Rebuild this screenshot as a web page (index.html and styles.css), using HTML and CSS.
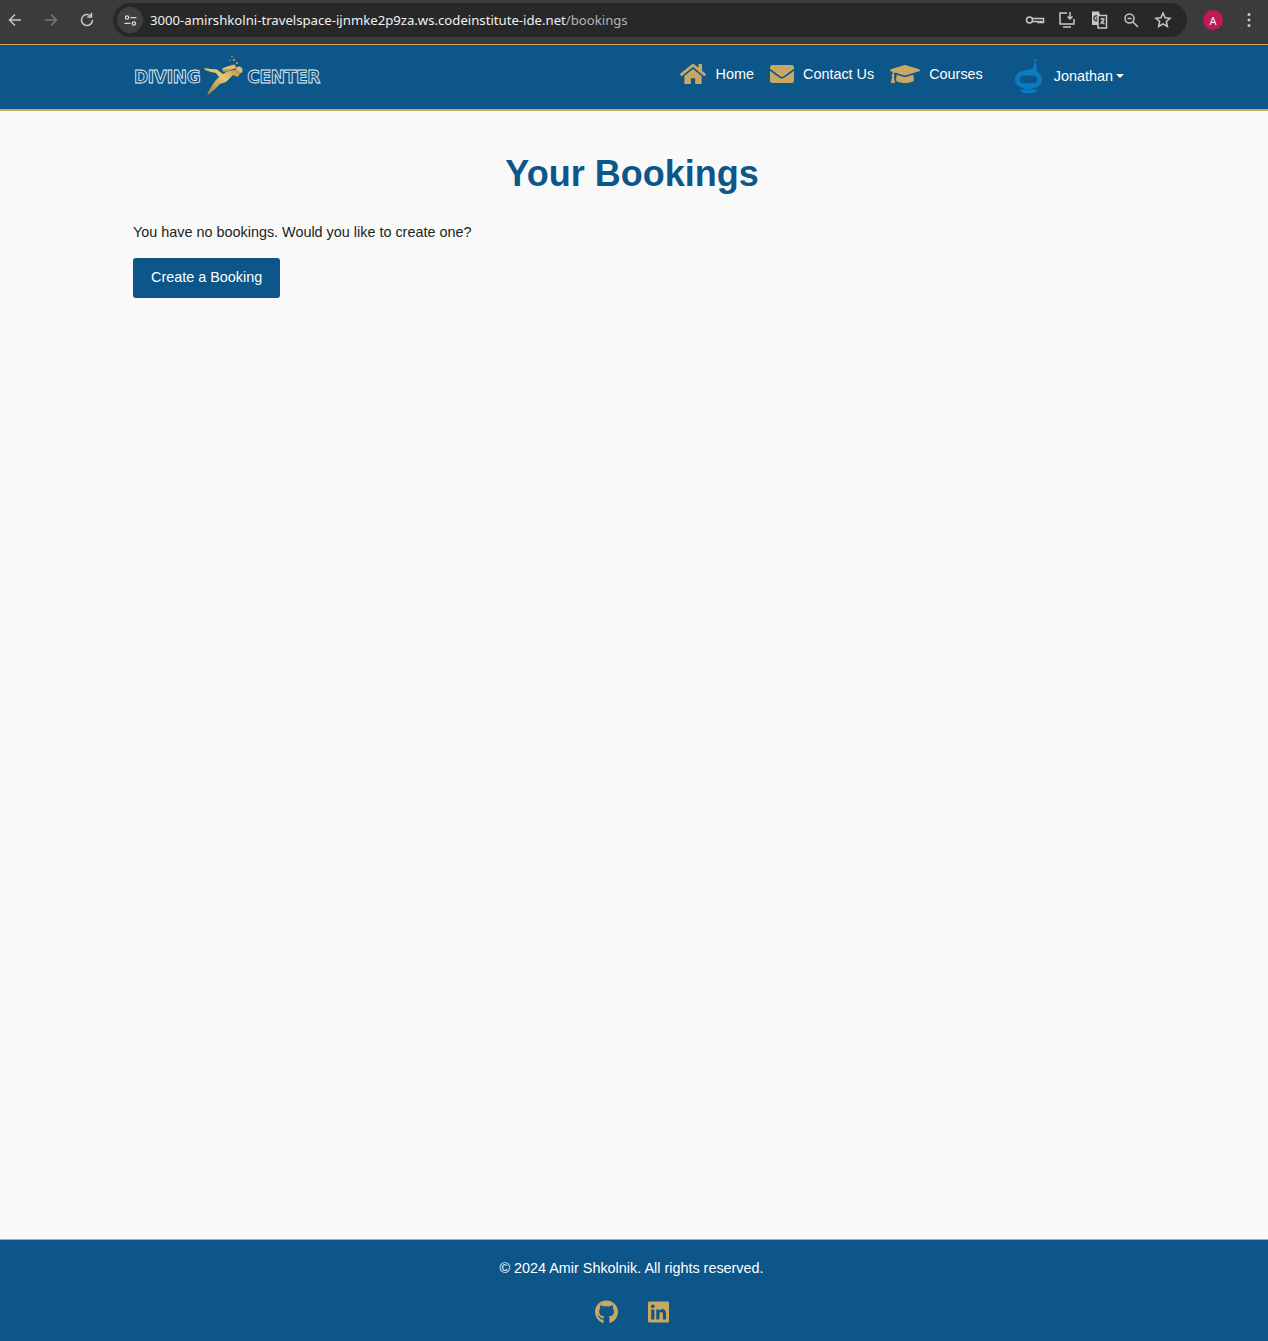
FILE: index.html
```html
<!DOCTYPE html>
<html lang="en">
<head>
    <meta charset="UTF-8">
    <meta name="viewport" content="width=device-width, initial-scale=1.0">
    <title>Your Bookings</title>
    <link rel="stylesheet" href="styles.css">
</head>
<body>
    <div class="browser-bar">
        <div class="browser-nav">
            <svg class="tool" viewBox="0 0 20 20"><path d="M16 10H5M10 4.500 4.500 10l5.500 5.500"/></svg>
            <svg class="tool tool-off" viewBox="0 0 20 20"><path d="M4 10h11M10 4.500l5.500 5.500-5.500 5.500"/></svg>
            <svg class="tool" viewBox="0 0 20 20"><path d="M15.500 10a5.500 5.500 0 1 1-1.700-4M14.500 2.800V7h-4.200"/></svg>
        </div>
        <div class="address">
            <span class="site-btn">
                <svg viewBox="0 0 20 20"><circle cx="6" cy="6.500" r="2"/><path d="M10 6.500h7M3 13.500h7"/><circle cx="14" cy="13.500" r="2"/></svg>
            </span>
            <span class="url">3000-amirshkolni-travelspace-ijnmke2p9za.ws.codeinstitute-ide.net<span class="url-path">/bookings</span></span>
            <div class="address-tools">
                <svg class="tool" viewBox="0 0 20 20"><circle cx="4.500" cy="10" r="3"/><path d="M7.500 8.500H18.500v4h-2v-1h-1.500v1h-2v-1H7.500"/></svg>
                <svg class="tool" viewBox="0 0 20 20"><path d="M10 3H3v11h14V9M6 17h8M13 2v7M10.500 6.500 13 9l2.500-2.500"/></svg>
                <svg class="tool" viewBox="0 0 20 20"><path class="solid" d="M3 1.500h7l1 3.500h-2v10H3z"/><path class="cut" d="M8.500 6a2.500 2.500 0 1 0 0 4.500V8.500H7"/><path d="M9 5.500h8.500V18H9zM11.500 9h4M13.500 8v1M15 9c-.5 3-2 4-3.500 5M12.500 11c.5 1.500 1.500 2.500 3 3"/></svg>
                <svg class="tool" viewBox="0 0 20 20"><circle cx="8.500" cy="8.500" r="4.500"/><path d="M12 12l5 5M6.500 8.500h4"/></svg>
                <svg class="tool" viewBox="0 0 20 20"><path d="M10 3l2.100 4.700 5 .5-3.800 3.300 1.100 5L10 13.900l-4.400 2.600 1.100-5L2.900 8.200l5-.5z"/></svg>
            </div>
        </div>
        <span class="avatar">A</span>
        <svg class="menu-dots" viewBox="0 0 4 16"><circle cx="2" cy="2.500" r="1.500"/><circle cx="2" cy="8" r="1.500"/><circle cx="2" cy="13.500" r="1.500"/></svg>
    </div>

    <header class="site-header">
        <a class="logo" href="#">
            <span class="logo-word">DIVING</span>
            <svg class="diver" viewBox="0 0 42 42">
                <defs>
                    <linearGradient id="gold" x1="0" y1="1" x2="1" y2="0">
                        <stop offset="0" stop-color="#9a7a3a"/>
                        <stop offset="0.6" stop-color="#e6c878"/>
                        <stop offset="1" stop-color="#b8933f"/>
                    </linearGradient>
                </defs>
                <path fill="url(#gold)" d="M0 12l7 1 6 .5 6 4.500 5-3 9-1.500 3 3.500-2 4-5-2-3 3-4 4-6 2-5 5-6 5-2 .5 4-7.500 4-6 4-4-3-4-5-1-6-2z"/>
                <rect fill="url(#gold)" x="18" y="10" width="14" height="4.500" rx="2" transform="rotate(-18 25 12)"/>
                <circle fill="url(#gold)" cx="35" cy="14" r="3.500"/>
                <g fill="#c9a65f">
                    <circle cx="28" cy="0.800" r="0.800"/>
                    <circle cx="30" cy="4" r="1.100"/>
                    <circle cx="33" cy="7" r="1"/>
                    <circle cx="26" cy="4.500" r="0.700"/>
                </g>
            </svg>
            <span class="logo-word">CENTER</span>
        </a>
        <nav class="main-nav">
            <a class="nav-link" href="#">
                <svg class="nav-icon icon-home" viewBox="0 0 576 512"><path d="M280.37 148.26L96 300.11V464a16 16 0 0 0 16 16l112.06-.29a16 16 0 0 0 15.92-16V368a16 16 0 0 1 16-16h64a16 16 0 0 1 16 16v95.64a16 16 0 0 0 16 16.05L464 480a16 16 0 0 0 16-16V300L295.67 148.26a12.19 12.19 0 0 0-15.3 0zM571.6 251.47L488 182.56V44.05a12 12 0 0 0-12-12h-56a12 12 0 0 0-12 12v72.61L318.47 43a48 48 0 0 0-61 0L4.34 251.47a12 12 0 0 0-1.6 16.9l25.5 31A12 12 0 0 0 45.15 301l235.22-193.74a12.19 12.19 0 0 1 15.3 0L530.9 301a12 12 0 0 0 16.9-1.6l25.5-31a12 12 0 0 0-1.7-16.93z"/></svg>
                Home
            </a>
            <a class="nav-link" href="#">
                <svg class="nav-icon icon-mail" viewBox="0 0 512 512"><path d="M502.3 190.8c3.900-3.100 9.700-.2 9.700 4.700V400c0 26.500-21.500 48-48 48H48c-26.500 0-48-21.500-48-48V195.600c0-5 5.700-7.800 9.700-4.700 22.400 17.400 52.100 39.500 154.100 113.600 21.100 15.400 56.700 47.800 92.200 47.600 35.700.3 72-32.800 92.300-47.600 102-74.100 131.600-96.300 154-113.700zM256 320c23.200.4 56.600-29.200 73.400-41.400 132.700-96.300 142.800-104.700 173.400-128.700 5.800-4.500 9.200-11.500 9.200-18.900v-19c0-26.500-21.500-48-48-48H48C21.500 64 0 85.500 0 112v19c0 7.400 3.400 14.300 9.200 18.900 30.600 23.900 40.700 32.400 173.400 128.700 16.800 12.200 50.200 41.800 73.400 41.400z"/></svg>
                Contact Us
            </a>
            <a class="nav-link" href="#">
                <svg class="nav-icon icon-cap" viewBox="0 0 640 512"><path d="M622.34 153.2L343.4 67.5c-15.2-4.670-31.600-4.670-46.790 0L17.660 153.200c-23.540 7.230-23.540 38.360 0 45.590l48.630 14.940c-10.670 13.190-17.230 29.280-17.880 46.900C38.780 266.150 32 276.110 32 288c0 10.780 5.680 19.850 13.860 25.650L20.330 428.530C18.110 438.520 25.710 448 35.940 448h56.110c10.240 0 17.840-9.480 15.620-19.470L82.140 313.650C90.320 307.850 96 298.780 96 288c0-11.570-6.470-21.250-15.660-26.870.76-15.020 8.440-28.300 20.690-36.720L296.600 284.500c9.060 2.780 26.440 6.250 46.790 0l278.950-85.700c23.550-7.240 23.550-38.360 0-45.600zM352.790 315.090c-28.530 8.760-52.840 3.920-65.590 0l-145.020-44.550L128 384c0 35.350 85.960 64 192 64s192-28.650 192-64l-14.180-113.470-145.030 44.560z"/></svg>
                Courses
            </a>
            <a class="user-link" href="#">
                <svg class="mask-icon" viewBox="0 0 28 36">
                    <circle cx="21" cy="1.500" r="1.500"/>
                    <rect x="19.800" y="4" width="2.400" height="8"/>
                    <path d="M5 14C9 10 18 12 19.800 8h2.400v6z"/>
                    <rect class="mask-ring" x="2.500" y="14.500" width="23" height="13" rx="6.500"/>
                    <rect x="10" y="28" width="8" height="3"/>
                    <path d="M5 31.500h18c-1 3-5 4-9 4s-8-1-9-4z"/>
                </svg>
                Jonathan
                <span class="caret"></span>
            </a>
        </nav>
    </header>

    <main class="content">
        <h1 class="page-title">Your Bookings</h1>
        <p class="empty-text">You have no bookings. Would you like to create one?</p>
        <a class="btn" href="#">Create a Booking</a>
    </main>

    <footer class="site-footer">
        <p class="copyright">© 2024 Amir Shkolnik. All rights reserved.</p>
        <div class="social">
            <a href="#"><svg class="social-github" viewBox="0 0 496 512"><path d="M165.900 397.400c0 2-2.300 3.600-5.200 3.600-3.300 0-5.600-1.600-5.600-3.600 0-2 2.300-3.600 5.200-3.600 3-.3 5.600 1.300 5.600 3.600zm-31.100-4.500c-.7 2 1.300 4.300 4.300 4.900 2.600 1 5.600 0 6.200-2s-1.300-4.300-4.300-5.200c-2.600-.7-5.500.3-6.200 2.300zm44.200-1.700c-2.900.7-4.900 2.600-4.600 4.900.3 2 2.900 3.300 5.900 2.600 2.900-.7 4.900-2.600 4.600-4.600-.3-1.900-3-3.200-5.900-2.900zM244.800 8C106.100 8 0 113.300 0 252c0 110.900 69.800 205.800 169.500 239.200 12.800 2.300 17.300-5.600 17.300-12.100 0-6.200-.3-40.400-.3-61.400 0 0-70 15-84.700-29.800 0 0-11.400-29.100-27.800-36.600 0 0-22.900-15.700 1.600-15.400 0 0 24.900 2 38.600 25.800 21.900 38.600 58.600 27.500 72.900 20.900 2.300-16 8.800-27.100 16-33.700-55.900-6.200-112.300-14.300-112.300-110.500 0-27.500 7.600-41.300 23.600-58.900-2.600-6.500-11.100-33.300 2.600-67.900 20.900-6.500 69 27 69 27 20-5.600 41.500-8.500 62.800-8.500s42.800 2.900 62.800 8.500c0 0 48.100-33.600 69-27 13.700 34.700 5.200 61.400 2.600 67.900 16 17.700 25.800 31.500 25.800 58.900 0 96.500-58.900 104.200-114.800 110.500 9.200 7.900 17 22.900 17 46.400 0 33.700-.3 75.400-.3 83.600 0 6.500 4.600 14.400 17.300 12.100C428.200 457.800 496 362.900 496 252 496 113.300 383.500 8 244.800 8z"/></svg></a>
            <a href="#"><svg class="social-linkedin" viewBox="0 0 448 512"><path d="M416 32H31.900C14.300 32 0 46.500 0 64.300v383.400C0 465.500 14.300 480 31.900 480H416c17.600 0 32-14.500 32-32.300V64.300c0-17.800-14.400-32.300-32-32.300zM135.400 416H69V202.200h66.500V416zm-33.200-243c-21.300 0-38.500-17.300-38.500-38.500S80.900 96 102.200 96c21.200 0 38.500 17.300 38.500 38.500 0 21.300-17.200 38.500-38.500 38.500zm282.100 243h-66.400V312c0-24.800-.5-56.700-34.500-56.700-34.600 0-39.900 27-39.900 54.900V416h-66.400V202.200h63.700v29.200h.9c8.900-16.800 30.600-34.500 62.900-34.500 67.200 0 79.700 44.300 79.700 101.900V416z"/></svg></a>
        </div>
    </footer>
</body>
</html>
```

FILE: styles.css
```css
* {
    box-sizing: border-box;
}
html, body {
    height: 100%;
}
body {
    font-family: "Liberation Sans", Arial, sans-serif;
    margin: 0;
    padding: 0;
    min-height: 100vh;
    display: flex;
    flex-direction: column;
    background-color: #f9f9f9;
    color: #222;
}
a {
    color: inherit;
    text-decoration: none;
}

/* browser toolbar */
.browser-bar {
    height: 44px;
    flex: none;
    display: flex;
    align-items: center;
    background-color: #3b3b3b;
    padding-bottom: 4px;
}
.browser-nav {
    display: flex;
    gap: 16px;
    width: 113px;
    padding-left: 5px;
}
.tool {
    width: 20px;
    height: 20px;
    fill: none;
    stroke: #c7c7c7;
    stroke-width: 1.500;
}
.tool .solid {
    fill: #c7c7c7;
    stroke: none;
}
.tool .cut {
    stroke: #3b3b3b;
}
.tool-off {
    stroke: #7a7a7a;
}
.address {
    width: 1074px;
    height: 34px;
    display: flex;
    align-items: center;
    border-radius: 17px;
    background-color: #282828;
    padding: 0 14px 0 4px;
}
.site-btn {
    width: 26px;
    height: 26px;
    flex: none;
    display: flex;
    align-items: center;
    justify-content: center;
    border-radius: 50%;
    background-color: #3f3f3f;
}
.site-btn svg {
    width: 17px;
    height: 17px;
    fill: none;
    stroke: #d8d8d8;
    stroke-width: 1.500;
}
.url {
    margin-left: 7px;
    font-family: "Noto Sans", sans-serif;
    font-size: 13.170px;
    color: #f1f1f1;
    white-space: nowrap;
}
.url-path {
    color: #b5b5b5;
}
.address-tools {
    display: flex;
    gap: 12px;
    margin-left: auto;
}
.avatar {
    width: 20px;
    height: 20px;
    margin-left: 16px;
    display: flex;
    align-items: center;
    justify-content: center;
    border-radius: 50%;
    background-color: #c2185b;
    color: #f5f5f5;
    font-family: "Noto Sans", sans-serif;
    font-size: 11px;
}
.menu-dots {
    width: 4px;
    height: 16px;
    margin-left: 24px;
    fill: #c7c7c7;
}

/* site header */
.site-header {
    height: 67px;
    flex: none;
    display: flex;
    align-items: center;
    justify-content: space-between;
    padding: 0 144px 0 134px;
    background-color: #0d5689;
    border-top: 1px solid #c8a862;
    border-bottom: 2px solid #c8a862;
}
.logo {
    display: flex;
    align-items: center;
    gap: 4px;
}
.logo-word {
    font-family: "DejaVu Sans", sans-serif;
    font-weight: 700;
    font-size: 17px;
    letter-spacing: -0.300px;
    color: transparent;
    -webkit-text-stroke: 0.800px #e8f2f8;
}
.diver {
    width: 42px;
    height: 42px;
    margin-right: -3px;
}
.main-nav {
    display: flex;
    align-items: center;
    margin-top: -2px;
}
.nav-link {
    display: flex;
    align-items: center;
    margin-left: 16px;
    font-size: 14.400px;
    color: #fff;
    margin-top: -4px;
}
.nav-icon {
    fill: #c8a862;
}
.icon-home {
    width: 26px;
    height: 24px;
    margin-right: 10px;
}
.icon-mail {
    width: 24px;
    height: 24px;
    margin-right: 9px;
}
.icon-cap {
    width: 30px;
    height: 24px;
    margin-right: 9px;
}
.user-link {
    display: flex;
    align-items: center;
    margin-left: 32px;
    font-size: 14.400px;
    color: #fff;
}
.mask-icon {
    width: 27px;
    height: 35px;
    margin-right: 12px;
    fill: #0a7cc4;
}
.mask-ring {
    fill: none;
    stroke: #0a7cc4;
    stroke-width: 5;
}
.caret {
    width: 0;
    height: 0;
    margin-left: 3px;
    border-top: 4px solid #fff;
    border-left: 4px solid transparent;
    border-right: 4px solid transparent;
}

/* page content */
.content {
    flex: 1;
    padding: 43px 133px 0;
}
.page-title {
    margin: 0 4px 28px 0;
    text-align: center;
    font-size: 36px;
    line-height: 40px;
    color: #0d5689;
}
.empty-text {
    margin: 0 0 16px;
    font-size: 14.400px;
    line-height: 20px;
}
.btn {
    display: inline-block;
    height: 40px;
    padding: 0 18px;
    line-height: 39px;
    font-size: 14.400px;
    color: #fff;
    background-color: #0d5689;
    border-radius: 3px;
}

/* footer */
.site-footer {
    flex: none;
    height: 102px;
    padding: 19px 5px 0 0;
    text-align: center;
    background-color: #0d5689;
    border-top: 1px solid #c8a862;
    color: #fff;
}
.copyright {
    margin: 0 0 23px;
    font-size: 14.400px;
    line-height: 18px;
}
.social {
    display: flex;
    justify-content: center;
    gap: 30px;
}
.social svg {
    display: block;
    height: 24px;
    fill: #c8a862;
}
.social-github {
    width: 23px;
}
.social-linkedin {
    width: 21px;
}
```
